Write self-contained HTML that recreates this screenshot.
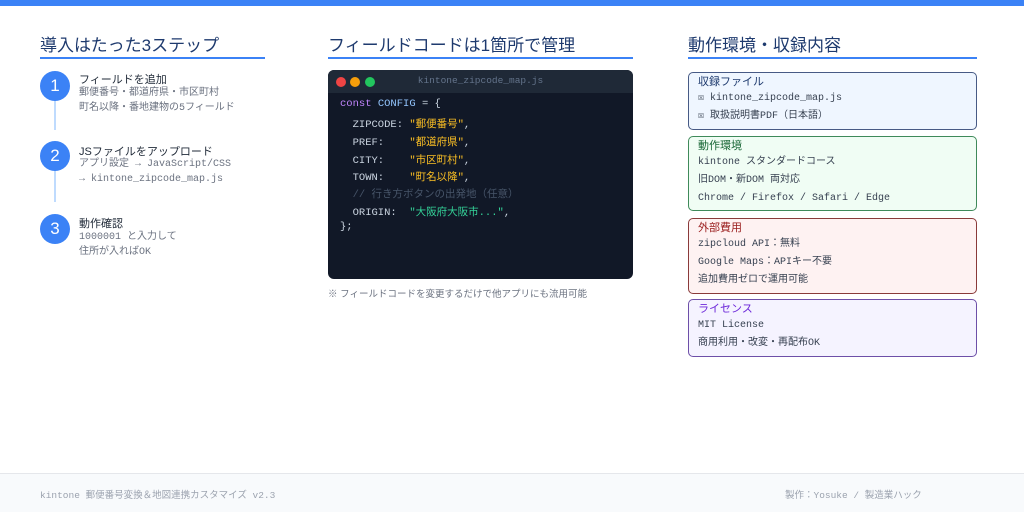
<!DOCTYPE html>
<html><head><meta charset="utf-8"><style>
*{margin:0;padding:0;box-sizing:border-box}
body{width:1024px;height:512px;background:#fff;position:relative;overflow:hidden;font-family:"Liberation Sans","Noto Sans CJK JP",sans-serif;color:#1f2937}
.a{position:absolute}
.mono{font-family:"Liberation Mono","Noto Sans CJK JP",monospace}
h2{position:absolute;font-size:17px;font-weight:400;color:#1e3a6e;top:31px}
.ul{position:absolute;top:57px;height:2px;background:#3b82f6}
.circ{position:absolute;left:40px;width:30px;height:30px;border-radius:50%;background:#3b82f6;color:#fff;font-size:17px;text-align:center;line-height:30px}
.vl{position:absolute;left:54px;width:2px;background:#bfdbfe}
.st{position:absolute;left:79px;font-size:11px;color:#1f2937}
.sd{position:absolute;left:79px;font-size:10px;color:#6b7280;line-height:15px}
.code{left:328px;top:70px;width:305px;height:209px;background:#111827;border-radius:6px;overflow:hidden}
.ch{height:23px;background:#1f2937;position:relative}
.dot{position:absolute;top:7px;width:10px;height:10px;border-radius:50%}
.cl{position:absolute;left:12px;font-size:10.5px;color:#cbd5e1;white-space:pre}
.k{color:#c084fc}.v{color:#93c5fd}.s{color:#fbbf24}.g{color:#34d399}.c{color:#475569}
.card{position:absolute;left:688px;width:289px;border:1px solid;border-radius:5px;padding:2px 9px}
.card .t{font-size:11px;line-height:15px}
.card .i{font-size:10px;line-height:18px;color:#374151}
</style></head><body>
<div class="a" style="left:0;top:0;width:1024px;height:6px;background:#3b82f6"></div>

<h2 style="left:40px">導入はたった3ステップ</h2>
<div class="ul" style="left:40px;width:225px"></div>
<h2 style="left:328px">フィールドコードは1箇所で管理</h2>
<div class="ul" style="left:328px;width:305px"></div>
<h2 style="left:688px">動作環境・収録内容</h2>
<div class="ul" style="left:688px;width:289px"></div>

<div class="vl" style="top:100px;height:30px"></div>
<div class="vl" style="top:170px;height:32px"></div>
<div class="circ" style="top:71px">1</div>
<div class="circ" style="top:141px">2</div>
<div class="circ" style="top:214px">3</div>
<div class="st" style="top:71px">フィールドを追加</div>
<div class="sd mono" style="top:86px">郵便番号・都道府県・市区町村<br>町名以降・番地建物の5フィールド</div>
<div class="st" style="top:143px">JSファイルをアップロード</div>
<div class="sd mono" style="top:157px">アプリ設定 → JavaScript/CSS<br>→ kintone_zipcode_map.js</div>
<div class="st" style="top:215px">動作確認</div>
<div class="sd mono" style="top:230px">1000001 と入力して<br>住所が入ればOK</div>

<div class="a code">
<div class="ch">
<div class="dot" style="left:8px;background:#ef4444"></div>
<div class="dot" style="left:22px;background:#f59e0b"></div>
<div class="dot" style="left:37px;background:#22c55e"></div>
<div class="a mono" style="left:0;width:100%;text-align:center;top:5px;font-size:9.5px;color:#64748b">kintone_zipcode_map.js</div>
</div>
<div class="cl mono" style="top:28px"><span class="k">const</span> <span class="v">CONFIG</span> = {</div>
<div class="cl mono" style="top:46px">  ZIPCODE: <span class="s">"郵便番号"</span>,</div>
<div class="cl mono" style="top:64px">  PREF:    <span class="s">"都道府県"</span>,</div>
<div class="cl mono" style="top:82px">  CITY:    <span class="s">"市区町村"</span>,</div>
<div class="cl mono" style="top:99px">  TOWN:    <span class="s">"町名以降"</span>,</div>
<div class="cl mono c" style="top:116px">  // 行き方ボタンの出発地（任意）</div>
<div class="cl mono" style="top:134px">  ORIGIN:  <span class="g">"大阪府大阪市..."</span>,</div>
<div class="cl mono" style="top:151px">};</div>
</div>
<div class="a" style="left:328px;top:286px;font-size:9.5px;color:#6b7280">※ フィールドコードを変更するだけで他アプリにも流用可能</div>

<div class="card" style="top:72px;height:58px;background:#eff6ff;border-color:#475a85">
<div class="t" style="color:#1e3a6e">収録ファイル</div>
<div class="i mono">☒ kintone_zipcode_map.js</div>
<div class="i mono">☒ 取扱説明書PDF（日本語）</div>
</div>
<div class="card" style="top:136px;height:75px;background:#f0fdf4;border-color:#3f8a5a">
<div class="t" style="color:#166534">動作環境</div>
<div class="i mono">kintone スタンダードコース</div>
<div class="i mono">旧DOM・新DOM 両対応</div>
<div class="i mono">Chrome / Firefox / Safari / Edge</div>
</div>
<div class="card" style="top:218px;height:76px;background:#fef2f2;border-color:#8a3a3a">
<div class="t" style="color:#991b1b">外部費用</div>
<div class="i mono">zipcloud API：無料</div>
<div class="i mono">Google Maps：APIキー不要</div>
<div class="i mono">追加費用ゼロで運用可能</div>
</div>
<div class="card" style="top:299px;height:58px;background:#f5f3ff;border-color:#6d4fa8">
<div class="t" style="color:#6d28d9">ライセンス</div>
<div class="i mono">MIT License</div>
<div class="i mono">商用利用・改変・再配布OK</div>
</div>

<div class="a" style="left:0;top:473px;width:1024px;height:39px;background:#f8fafc;border-top:1px solid #e5e7eb"></div>
<div class="a mono" style="left:40px;top:487px;font-size:9.5px;color:#9ca3af">kintone 郵便番号変換＆地図連携カスタマイズ v2.3</div>
<div class="a mono" style="left:785px;top:487px;font-size:9.5px;color:#9ca3af">製作：Yosuke / 製造業ハック</div>
</body></html>
